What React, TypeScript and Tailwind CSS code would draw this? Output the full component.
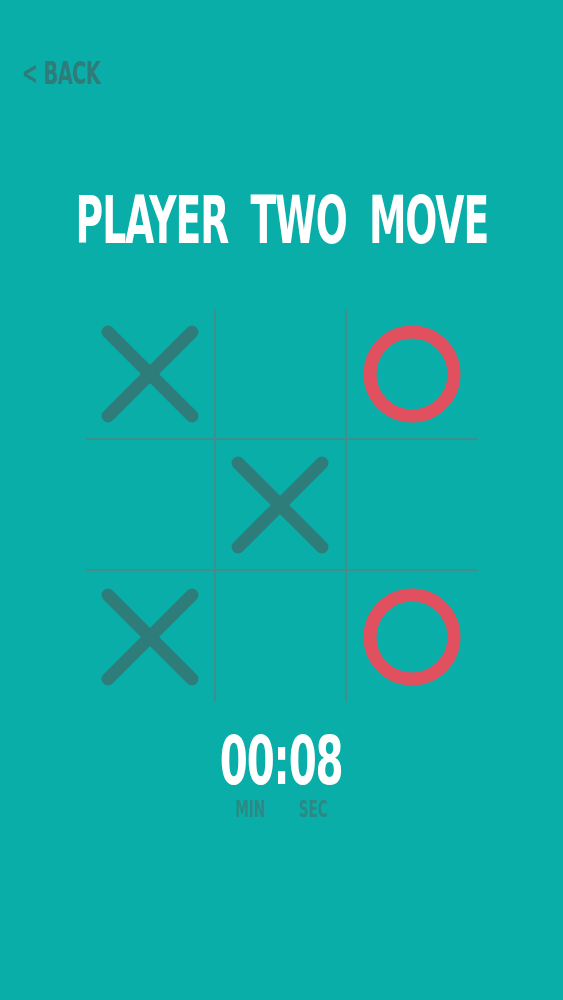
import React from 'react';

type Mark = 'x' | 'o' | null;

const board: Mark[] = ['x', null, 'o', null, 'x', null, 'x', null, 'o'];

const Cross = () => (
    <svg width="100" height="100" viewBox="0 0 100 100">
        <g stroke="#2f7d7a" strokeWidth="13" strokeLinecap="round">
            <line x1="8" y1="8" x2="92" y2="92" />
            <line x1="92" y1="8" x2="8" y2="92" />
        </g>
    </svg>
);

const Ring = () => (
    <svg width="100" height="100" viewBox="0 0 100 100">
        <circle cx="50" cy="50" r="42" fill="none" stroke="#e0505f" strokeWidth="13" />
    </svg>
);

export default function App() {
    return (
        <div className="w-[563px] h-[1000px] bg-[#0aaea9] flex flex-col items-center font-['Liberation_Sans_Narrow','DejaVu_Sans_Condensed','Liberation_Sans',sans-serif] font-bold whitespace-nowrap">
            <div className="self-start pl-[22px] pt-[57px]">
                <div className="text-[32px] leading-none text-[#2f7d7a] tracking-tight origin-left scale-x-[0.67]">
                    &lt; BACK
                </div>
            </div>

            <h1 className="mt-[99px] text-[66px] leading-none text-white tracking-tight [word-spacing:16px] scale-x-[0.635]">
                PLAYER TWO MOVE
            </h1>

            <div className="mt-[55px] grid grid-cols-3 w-[392px]">
                {board.map((mark, i) => {
                    const col = i % 3;
                    const row = Math.floor(i / 3);
                    return (
                        <div
                            key={i}
                            className={`h-[131px] flex items-center justify-center border-[#3f8f8c] ${col < 2 ? 'border-r-2' : ''} ${row < 2 ? 'border-b-2' : ''}`}
                        >
                            {mark === 'x' && <Cross />}
                            {mark === 'o' && <Ring />}
                        </div>
                    );
                })}
            </div>

            <div className="mt-[31px] text-[68px] leading-[56px] text-white tracking-tight scale-x-[0.66]">
                00:08
            </div>
            <div className="mt-[9px] flex text-[23px] leading-none text-[#2c8a85]">
                <span className="w-[63px] text-center scale-x-[0.66]">MIN</span>
                <span className="w-[63px] text-center scale-x-[0.66]">SEC</span>
            </div>
        </div>
    );
}
